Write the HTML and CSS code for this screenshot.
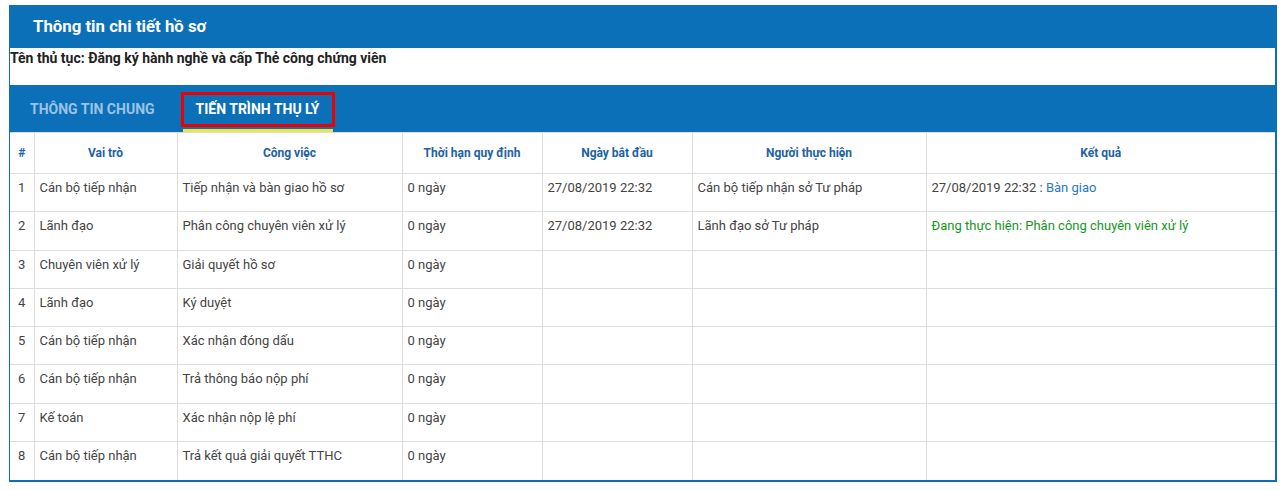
FILE: index.html
```html
<!DOCTYPE html>
<html>
<head>
	<meta charset="UTF-8">
	<title>Thông tin chi tiết hồ sơ</title>
	<link rel="stylesheet" href="styles.css">
</head>
<body>
<div class="panel">
	<div class="panel-head">Thông tin chi tiết hồ sơ</div>
	<div class="panel-info">Tên thủ tục: Đăng ký hành nghề và cấp Thẻ công chứng viên</div>

	<ul class="tabs">
		<li class="tab">THÔNG TIN CHUNG</li>
		<li class="tab active">TIẾN TRÌNH THỤ LÝ</li>
	</ul>

	<table class="steps">
		<thead>
			<tr>
				<th class="c-no">#</th>
				<th class="c-role">Vai trò</th>
				<th class="c-job">Công việc</th>
				<th class="c-due">Thời hạn quy định</th>
				<th class="c-start">Ngày bắt đầu</th>
				<th class="c-who">Người thực hiện</th>
				<th>Kết quả</th>
			</tr>
		</thead>
		<tbody>
			<tr>
				<td class="c-no">1</td>
				<td>Cán bộ tiếp nhận</td>
				<td>Tiếp nhận và bàn giao hồ sơ</td>
				<td>0 ngày</td>
				<td>27/08/2019 22:32</td>
				<td>Cán bộ tiếp nhận sở Tư pháp</td>
				<td>27/08/2019 22:32 : <a class="link" href="#">Bàn giao</a></td>
			</tr>
			<tr>
				<td class="c-no">2</td>
				<td>Lãnh đạo</td>
				<td>Phân công chuyên viên xử lý</td>
				<td>0 ngày</td>
				<td>27/08/2019 22:32</td>
				<td>Lãnh đạo sở Tư pháp</td>
				<td class="doing">Đang thực hiện: Phân công chuyên viên xử lý</td>
			</tr>
			<tr>
				<td class="c-no">3</td>
				<td>Chuyên viên xử lý</td>
				<td>Giải quyết hồ sơ</td>
				<td>0 ngày</td>
				<td></td>
				<td></td>
				<td></td>
			</tr>
			<tr>
				<td class="c-no">4</td>
				<td>Lãnh đạo</td>
				<td>Ký duyệt</td>
				<td>0 ngày</td>
				<td></td>
				<td></td>
				<td></td>
			</tr>
			<tr>
				<td class="c-no">5</td>
				<td>Cán bộ tiếp nhận</td>
				<td>Xác nhận đóng dấu</td>
				<td>0 ngày</td>
				<td></td>
				<td></td>
				<td></td>
			</tr>
			<tr>
				<td class="c-no">6</td>
				<td>Cán bộ tiếp nhận</td>
				<td>Trả thông báo nộp phí</td>
				<td>0 ngày</td>
				<td></td>
				<td></td>
				<td></td>
			</tr>
			<tr>
				<td class="c-no">7</td>
				<td>Kế toán</td>
				<td>Xác nhận nộp lệ phí</td>
				<td>0 ngày</td>
				<td></td>
				<td></td>
				<td></td>
			</tr>
			<tr>
				<td class="c-no">8</td>
				<td>Cán bộ tiếp nhận</td>
				<td>Trả kết quả giải quyết TTHC</td>
				<td>0 ngày</td>
				<td></td>
				<td></td>
				<td></td>
			</tr>
		</tbody>
	</table>
</div>
</body>
</html>
```

FILE: styles.css
```css
body {
	margin: 5px 9px;
	font-family: Roboto, "Liberation Sans", Arial, sans-serif;
	background: #fff;
}
.panel {
	border: 1px solid #0b70b8;
	border-right-width: 2px;
	border-bottom-width: 2px;
	box-shadow: 1px 2px 4px rgba(0, 0, 0, 0.2);
}
.panel-head {
	height: 42px;
	line-height: 40px;
	padding-left: 23px;
	background: #0b70b8;
	color: #fff;
	font-size: 16.8px;
	font-weight: bold;
}
.panel-info {
	height: 37px;
	padding-top: 2px;
	box-sizing: border-box;
	font-size: 14px;
	font-weight: bold;
	color: #222;
}
.tabs {
	display: flex;
	margin: 0;
	padding: 7px 0 0 5px;
	height: 47px;
	box-sizing: border-box;
	list-style: none;
	background: #0b70b8;
}
.tab {
	position: relative;
	height: 35px;
	line-height: 29px;
	padding: 0 12px;
	margin-right: 11px;
	border: 3px solid transparent;
	box-sizing: border-box;
	font-size: 14px;
	font-weight: bold;
	color: #9cc3e5;
}
.tab.active {
	color: #fff;
	border-color: #ee0000;
}
.tab.active::after {
	content: "";
	position: absolute;
	left: -1px;
	right: -1px;
	bottom: -8px;
	height: 3px;
	background: #f3e146;
}
.steps {
	width: 100%;
	border-collapse: collapse;
	font-size: 13px;
	color: #444;
	table-layout: fixed;
}
.steps th,
.steps td {
	border: 1px solid #ddd;
	text-align: left;
	vertical-align: top;
}
.steps tr > :first-child {
	border-left: none;
}
.steps tr > :last-child {
	border-right: none;
}
.steps tbody tr:last-child td {
	border-bottom: none;
}
.steps th {
	height: 41px;
	vertical-align: middle;
	text-align: center;
	font-size: 12px;
	font-weight: bold;
	color: #1d62a3;
	padding: 0 5px;
	box-sizing: border-box;
}
.steps td {
	height: 38.3px;
	padding: 6px 5px 0;
	box-sizing: border-box;
	line-height: 15px;
}
.steps td.c-no {
	text-align: center;
	padding: 6px 0 0;
}
.c-no { width: 24px; }
.c-role { width: 143px; }
.c-job { width: 225px; }
.c-due { width: 140px; }
.c-start { width: 150px; }
.c-who { width: 234px; }
.link {
	color: #2a7ac0;
	text-decoration: none;
}
.doing {
	color: #15961c;
}
```
